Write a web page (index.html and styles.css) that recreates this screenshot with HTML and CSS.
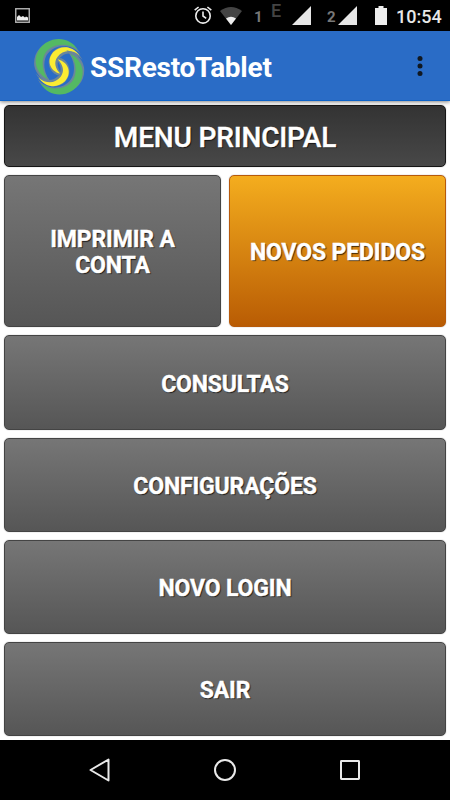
FILE: index.html
```html
<!DOCTYPE html>
<html lang="pt">
<head>
<meta charset="utf-8">
<title>SSRestoTablet</title>
<link rel="stylesheet" href="styles.css">
</head>
<body>
<header class="status">
  <svg class="picture" width="15" height="15" viewBox="0 0 15 15"><rect x=".75" y=".75" width="13.5" height="13.5" fill="none" stroke="#b4b4b4" stroke-width="1.4"/><path d="M2 12.5V9l2-2 2 2 2-1 2 1.5 1-1 2 1v3z" fill="#eee"/></svg>
  <div class="indicators">
    <svg class="alarm" width="18" height="18" viewBox="0 0 18 18" fill="none" stroke="#eee" stroke-width="1.6"><circle cx="9" cy="9.9" r="7.2"/><path d="M9 5.5V10l3.2 2.4M.7 4.2 4.6 1M17.3 4.2 13.4 1"/></svg>
    <svg class="wifi" width="22" height="18" viewBox="0 0 22 18"><path d="M0 4Q11-4 22 4L11 18z" fill="#444"/><path d="M6 11.5Q11 8.2 16 11.5L11 18z" fill="#eee"/></svg>
    <span class="sim sim-one">1</span>
    <span class="network">E</span>
    <svg class="signal-one" width="19" height="19" viewBox="0 0 19 19"><path d="M19 0V19H0z" fill="#e6e6e6"/></svg>
    <span class="sim sim-two">2</span>
    <svg class="signal-two" width="19" height="19" viewBox="0 0 19 19"><path d="M19 0V19H0z" fill="#e6e6e6"/></svg>
    <svg class="battery" width="12" height="19" viewBox="0 0 12 19"><path d="M3.5 0h5v2H12v17H0V2h3.5z" fill="#eee"/></svg>
    <span class="clock">10:54</span>
  </div>
</header>
<div class="appbar">
  <svg class="logo" width="52" height="60" viewBox="9 9 156 180">
    <defs>
      <g id="swirl">
        <path d="M152 60C132 24 98 12 68 20C30 30 8 60 13 96C18 122 40 143 66 147C46 126 38 98 46 72C58 36 114 18 152 60Z" fill="#6a869c"/>
        <path d="M144 48C126 18 96 10 68 17C36 26 16 54 17 84C18 106 34 128 54 136C40 116 33 90 42 66C54 32 106 20 144 48Z" fill="#54b963"/>
        <path d="M158 78C132 34 92 28 68 54C48 78 54 112 82 124L97 120C82 106 78 84 90 71C106 52 138 54 158 78Z" fill="#6a869c"/>
        <path d="M150 65C126 33 92 33 70 54C50 76 56 110 92 120C76 104 70 84 83 68C98 49 124 44 150 65Z" fill="#fbec32"/>
      </g>
    </defs>
    <use href="#swirl"/>
    <use href="#swirl" transform="rotate(180 87.5 98)"/>
  </svg>
  <h1 class="title">SSRestoTablet</h1>
  <svg class="more" width="6" height="20" viewBox="0 0 6 20" fill="#111820"><circle cx="3" cy="2.6" r="2.5"/><circle cx="3" cy="10" r="2.5"/><circle cx="3" cy="17.4" r="2.5"/></svg>
</div>
<main class="menu">
  <h2 class="tile heading">MENU PRINCIPAL</h2>
  <div class="pair">
    <button class="tile">IMPRIMIR A<br>CONTA</button>
    <button class="tile orange">NOVOS PEDIDOS</button>
  </div>
  <button class="tile">CONSULTAS</button>
  <button class="tile">CONFIGURAÇÕES</button>
  <button class="tile">NOVO LOGIN</button>
  <button class="tile">SAIR</button>
</main>
<nav class="navbar">
  <svg width="24" height="26" viewBox="0 0 24 26"><path d="M2.5 13 20.5 2.5v21z"/></svg>
  <svg width="24" height="26" viewBox="0 0 24 26"><circle cx="12" cy="13" r="10"/></svg>
  <svg width="24" height="26" viewBox="0 0 24 26"><rect x="3" y="4" width="18" height="18" rx=".4"/></svg>
</nav>
</body>
</html>
```
FILE: styles.css
```css
* { box-sizing: border-box; }
body {
  margin: 0;
  width: 450px;
  height: 800px;
  display: flex;
  flex-direction: column;
  background: #fff;
  font-family: Roboto, sans-serif;
  overflow: hidden;
}
.status {
  height: 31px;
  background: #000;
  display: flex;
  justify-content: space-between;
  align-items: flex-start;
  padding: 0 9px 0 15px;
}
.picture { margin-top: 8px; }
.indicators { display: flex; align-items: flex-start; color: #e8e8e8; }
.alarm { margin: 6px 0 0 0; }
.wifi { margin: 7px 12px 0 8px; }
.sim { font-size: 15px; line-height: 16px; font-weight: 700; color: #777; margin-top: 9px; width: 9px; }
.network { font-size: 18px; line-height: 20px; font-weight: 500; color: #444; margin: 1px 0 0 8px; width: 11px; }
.signal-one { margin: 6px 16px 0 10px; }
.signal-two { margin: 6px 18px 0 2px; }
.battery { margin-top: 6px; }
.clock { font-size: 18px; line-height: 20px; font-weight: 500; margin: 7px 0 0 9px; width: 45px; white-space: nowrap; }
.appbar {
  height: 70px;
  background: #2a6cc6;
  border-bottom: 1px solid #0d63c9;
  box-shadow: 0 1px 4px rgba(0, 0, 0, .5);
  display: flex;
  align-items: center;
  padding: 1px 27px 0 33px;
  position: relative;
}
.logo { margin-top: 2px; }
.title {
  margin: 4px auto 0 5px;
  font-size: 28px;
  line-height: 34px;
  font-weight: 700;
  letter-spacing: -.25px;
  color: #fff;
}
.menu {
  height: 639px;
  padding: 4px;
  display: grid;
  grid-template-rows: 62px 152px 95px 94px 94px 94px;
  row-gap: 8px;
}
.pair { display: grid; grid-template-columns: 1fr 1fr; gap: 8px; }
.tile {
  margin: 0;
  padding: 4px 0 0;
  border: 1px solid #444;
  border-radius: 5px;
  background: linear-gradient(#767676, #565656);
  box-shadow: 0 0 1px rgba(0, 0, 0, .5);
  display: flex;
  align-items: center;
  justify-content: center;
  text-align: center;
  font-family: inherit;
  font-size: 23px;
  line-height: 26px;
  font-weight: 700;
  letter-spacing: -.15px;
  color: #fff;
  -webkit-text-stroke: .4px #fff;
  text-shadow: 1px 1px 1px rgba(0, 0, 0, .8);
}
.heading {
  border-color: #161616;
  background: linear-gradient(#333, #484848);
  font-size: 28px;
  font-weight: 500;
}
.orange {
  border-color: #b75a0b;
  background: linear-gradient(#f4ad1e, #b95c04);
}
.navbar {
  height: 60px;
  background: #000;
  display: flex;
  align-items: center;
  justify-content: space-between;
  padding: 0 88px;
}
.navbar svg { fill: none; stroke: #e9e9e9; stroke-width: 2; stroke-linejoin: round; }
```
